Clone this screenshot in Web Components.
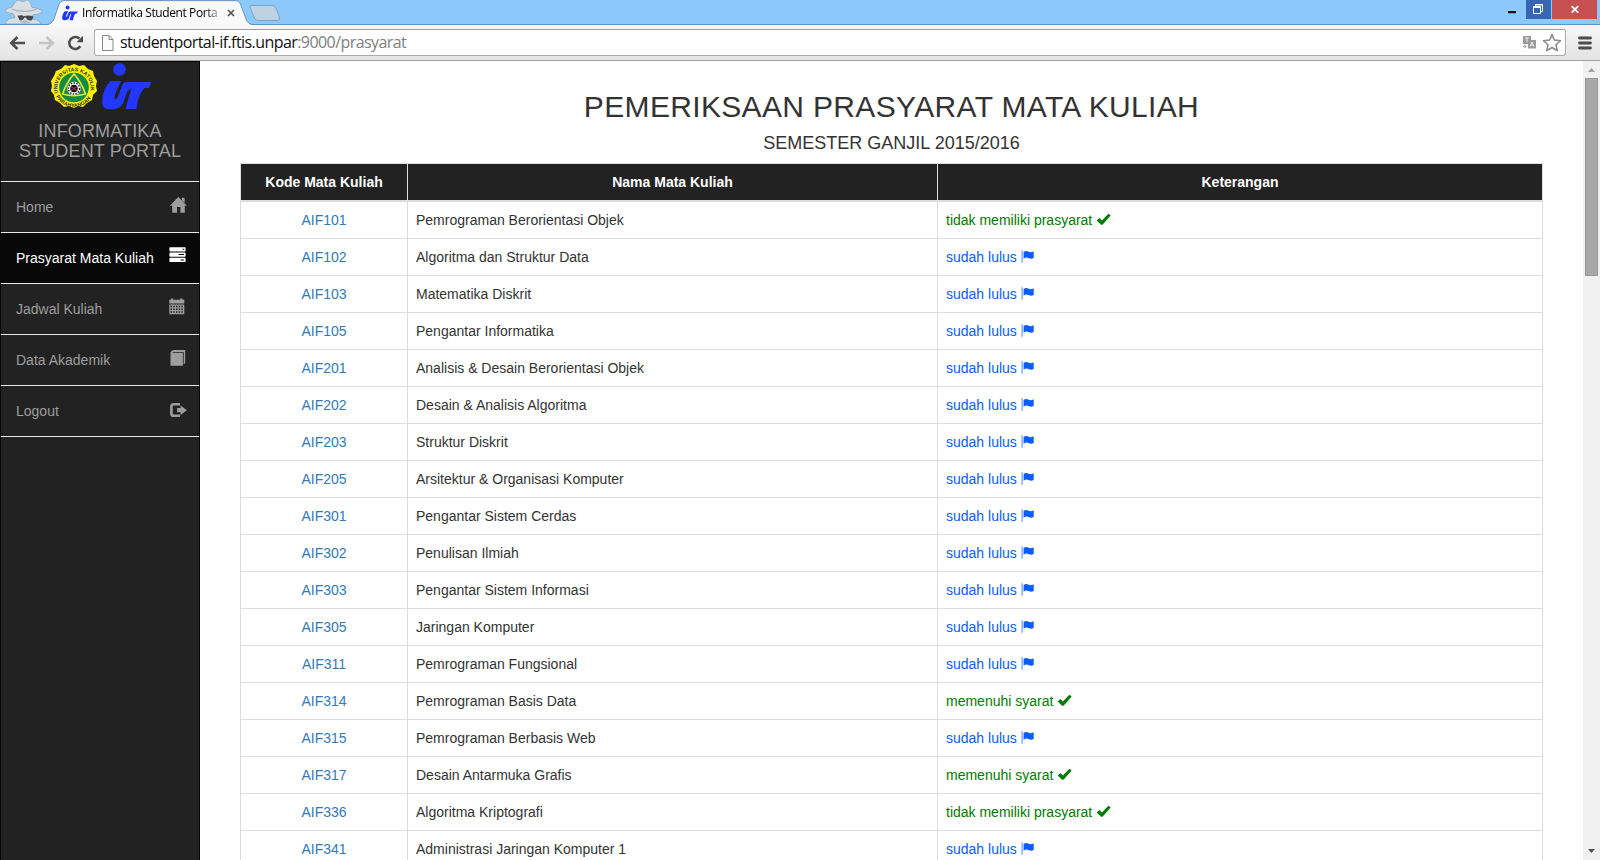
<!DOCTYPE html>
<html lang="id">
<head>
<meta charset="utf-8">
<title>Informatika Student Portal</title>
<style>
html,body{margin:0;height:100%;overflow:hidden;background:#fff}
body{font:14px/20px "Liberation Sans",Arial,sans-serif;color:#333}
</style>
</head>
<body>
<browser-window>
  <student-sidebar slot="page">
    <nav-item icon="home">Home</nav-item>
    <nav-item icon="tasks" active>Prasyarat Mata Kuliah</nav-item>
    <nav-item icon="calendar">Jadwal Kuliah</nav-item>
    <nav-item icon="book">Data Akademik</nav-item>
    <nav-item icon="logout">Logout</nav-item>
  </student-sidebar>
  <prasyarat-page slot="page">
    <span slot="title">PEMERIKSAAN PRASYARAT MATA KULIAH</span>
    <span slot="term">SEMESTER GANJIL 2015/2016</span>
  </prasyarat-page>
  <scroll-bar slot="page"></scroll-bar>
</browser-window>
<script>
const define = (name, html, setup) => customElements.define(name, class extends HTMLElement {
  constructor() {
    super();
    const t = document.createElement('template');
    t.innerHTML = html;
    this.attachShadow({mode: 'open'}).append(t.content.cloneNode(true));
  }
  connectedCallback() { if (setup) setup(this, this.shadowRoot); }
});

const ICONS = {
  home: '<svg width="18" height="17" viewBox="-.8 .3 18 17"><path d="M8.500 .2L17 9H15v7H10.600v-5.600H7.200V16H2.400V9H0z"/><path d="M12 1h2.800v5L12 3.500z"/></svg>',
  tasks: '<svg width="18" height="17" viewBox="0 1.600 18 17" overflow="visible"><path fill-rule="evenodd" d="M1 .8H16l.6.6v3l-.6.6H1L.4 4.400V1.400zM13.500 2.300h1.800v1H13.500zM1 6H16l.6.6v3.200l-.6.6H1l-.6-.6V6.600zM9.500 7.700h5.500v1H9.500zM1 11.400H16l.6.6v3l-.6.6H1l-.6-.6V12zM11.500 13h3.500v1h-3.500z"/></svg>',
  calendar: '<svg width="18" height="17" viewBox="0 .8 18 17" overflow="visible"><path d="M.3 1.500H2V.3h2.300v1.200h6.800V.3h2.300v1.200h1.900v3.800H.3z"/><path fill-rule="evenodd" d="M.3 6.200h15v9.900H.3zM1.500 7.500v1.500h1.500V7.500zM4.300 7.500v1.500H5.800V7.500zM7 7.500v1.500h1.500V7.500zM9.700 7.500v1.500h1.500V7.500zM12.400 7.500v1.500h1.500V7.500zM1.500 10.300V11.800h1.500v-1.500zM4.300 10.300V11.800H5.800v-1.500zM7 10.300V11.800h1.500v-1.500zM9.700 10.300V11.800h1.500v-1.500zM12.400 10.300V11.800h1.500v-1.500zM1.500 13.100v1.400h1.500v-1.400zM4.300 13.100v1.400H5.800v-1.400zM7 13.100v1.400h1.500v-1.400zM9.700 13.100v1.400h1.500v-1.400zM12.400 13.100v1.400h1.500v-1.400z"/></svg>',
  book: '<svg width="18" height="17" viewBox="-.5 .5 18 17"><path d="M3.400 .6h12.300v12.800l-1.500 1.800V2.400H4.200L2.400 3.200H13.400v13H1V2.800z"/></svg>',
  logout: '<svg width="18" height="17" viewBox="-.6 0 18 17" overflow="visible"><path d="M10.500 2.300H4.200Q1.800 2.300 1.800 4.600V11.400Q1.800 13.800 4.200 13.800H10.500" fill="none" stroke="currentColor" stroke-width="2.600"/><path d="M11 3.500L17.300 8.200 11 12.900V10.300H7.500V6.100H11z"/></svg>',
  ok: '<svg width="16" height="14"><path d="M.7 8.600L3.400 5.900l2.500 2.500L12.400 1.700l2.300 1.900L6.500 12.800H5.100z"/></svg>',
  flag: '<svg width="14" height="15"><path d="M.6 1.300h1v12.500H.6z" opacity=".75"/><path d="M2.600 3.100C4.500 1.500 6 1.900 7.600 2.800 9.300 3.500 10.800 3.300 12.700 2.200V9c-1.800 1-3.400 .9-5.100 .1C6 8.400 4.500 8.200 2.600 9.700z"/></svg>'
};

const FIGURE = '<circle cx="17.500" cy="6" r="6.200"/><path d="M8.500 17.500H19L14 28.500Q11.500 35.500 13.200 35.700 15.200 35.700 17 30L20.800 20.500Q21.700 18.400 24.500 18.400H49.300L47 24.500H42.500Q38 29 36.300 36 35 40 34.300 45.600H23.500L27.500 31 29.500 25.300 25.500 27.500 21 40Q18 45.700 9.500 45.700H6Q0 45 .2 38.200 0 26 8.500 17.500z"/>';

define('glyph-icon', `<style>:host{display:block;line-height:0}svg{display:block;fill:currentColor}</style>`,
  (el, root) => root.append(Object.assign(document.createElement('template'), {innerHTML: ICONS[el.getAttribute('name')]}).content));

define('window-controls', `<style>
:host{display:flex;align-items:flex-start;margin-right:3px}
svg{display:block}.r{background:#3665b3}.c{background:#c75050}
</style>
<svg width="26" height="19"><path d="M8 11h8v2.200H8z" fill="#111"/></svg>
<svg class="r" width="25" height="19"><g fill="none" stroke="#fff"><path d="M9.500 7V4.500h7v7H14"/><path d="M7.500 6.500h7v7h-7z"/><path d="M7 7.500h8M9 5h8"/></g></svg>
<svg width="1" height="19"></svg>
<svg class="c" width="45" height="19"><path d="M19.700 6.200l6.500 6.500m0-6.500l-6.500 6.500" stroke="#fff" stroke-width="1.900"/></svg>`);

define('tab-strip', `<style>
:host{display:flex;height:25px;background:#8cc8fa;box-shadow:inset 0 -1px #5f93c4;box-sizing:border-box}
.spy{flex:none;margin-left:4px}
.tab{position:relative;width:222px;height:25px;margin-left:5px;flex:none}
.tab>svg{position:absolute;left:0;top:0}
.in{position:relative;display:flex;align-items:center;height:25px;padding-left:15px}
.in span{width:142px;margin-left:4px;white-space:nowrap;font:12px/24px "Open Sans","Noto Sans",sans-serif;letter-spacing:-.4px;color:#000;
-webkit-mask:linear-gradient(90deg,#000 86%,rgba(0,0,0,.3) 97%)}
.new{margin:5px 0 0 -20px;flex:none}.gap{flex:1}
</style>
<svg class="spy" width="38" height="24" viewBox="5 1 34 23" preserveAspectRatio="none"><path d="M6 24q2-6 9-6l-2-4q-7-1-7-3 3-3 6-3L15 3q2-3 5-1 3 1 5-1 3 0 4 4l1 3q7 1 9 4-2 3-8 3l-1 4q7 1 8 5z" fill="#d9dee2" stroke="#8aa3b8" stroke-width=".7"/><path d="M12 10q12 4 22 0" stroke="#a9b2ba" stroke-width="1.200" fill="none"/><path d="M17 16q5-1 5.500 .6 4-1.600 9 .2l-1.500 3.600q-4 1-5.500-2.600h-1q-2 3.600-4.500 2.600z" fill="#43494e"/><path d="M19 22l5-2 5 3-4 1z" fill="#b5bdc4"/></svg>
<div class="tab"><svg width="208" height="25"><path d="M0 25Q5 24 7 19L12 4Q13.500 .6 17 .6H189Q192 .6 193.500 4L199 19Q201 24.500 206 25z" fill="#f9f9f9"/><path d="M0 24.500Q5 24 7 19L12 4Q13.500 .6 17 .6H189Q192 .6 193.500 4L199 19Q201 24.500 206 24.500" fill="none" stroke="#6d95ba"/></svg>
<div class="in"><svg width="16" height="16" viewBox="0 0 50 46" fill="#2238ff">${FIGURE}</svg><span>Informatika Student Porta</span><svg width="14" height="12"><path d="M4 3l6 6m0-6l-6 6" stroke="#555" stroke-width="1.700"/></svg></div></div>
<svg class="new" width="32" height="17"><path d="M1 .5H23Q26 .5 27 3L30.500 13Q31 15.500 28.500 15.500H9Q6.500 15.500 5.500 13L1.500 3Q.5 1 1 .5z" fill="#bdd3e4" stroke="#7fa4c3"/></svg>
<div class="gap"></div><window-controls></window-controls>`);

define('tool-bar', `<style>
:host{display:flex;align-items:center;height:36px;box-sizing:border-box;padding:0 9px 0 9px;background:linear-gradient(#f8f8f8,#e3e3e3);border-bottom:1px solid #a0a0a0}
svg{flex:none;display:block}
.nav{margin-right:12px}.re{margin-right:10px}
.box{flex:1;display:flex;align-items:center;height:27px;box-sizing:border-box;border:1px solid #acacac;border-top-color:#a0a0a0;border-radius:3px;background:#fff;padding:0 3px 0 7px}
.url{flex:1;margin-left:6px;font:16px/22px "Open Sans","Noto Sans",sans-serif;padding-bottom:2px;letter-spacing:-.57px;color:#808080;white-space:nowrap}
.url b{font-weight:400;color:#111}
.menu{margin-left:12px;margin-right:-1px}
</style>
<svg class="nav" width="17" height="16"><path d="M16 8H3M8.500 2L2.300 8l6.200 6" fill="none" stroke="#505050" stroke-width="2.700"/></svg>
<svg class="nav" width="17" height="16"><path d="M1 8h13M8.500 2l6.200 6-6.200 6" fill="none" stroke="#c5c5c5" stroke-width="2.700"/></svg>
<svg class="re" width="17" height="16"><path d="M13.300 11.300A6 6 0 1 1 12.500 3.700" fill="none" stroke="#4b4b4b" stroke-width="2.500"/><path d="M16 .7V7.200H9.500z" fill="#4b4b4b"/></svg>
<div class="box"><svg width="12" height="16"><path d="M.5 .5H7l4 4V15.500H.5zM7 .5v4h4" fill="#fbfbfb" stroke="#888"/></svg>
<div class="url"><b>studentportal-if.ftis.unpar</b>:9000/prasyarat</div>
<svg width="15" height="15"><path d="M1 1h8v4h5v8.500H6V9H1z" fill="#999"/><path d="M3 3h4M5 3v4M8 11.500l2-4.500 2 4.500M9 10h2" stroke="#eee" fill="none" stroke-width="1"/><path d="M1 11.500h4M3 9.700v4" stroke="#999" stroke-width="1.200" stroke-dasharray="1.400 .8"/></svg>
<svg style="margin-left:5px" width="20" height="19" viewBox="0 0 20 19"><path d="M10 1.500l2.400 5.600 6.100.6-4.600 4 1.400 6-5.300-3.200-5.300 3.200 1.400-6-4.600-4 6.100-.6z" fill="#fff" stroke="#888" stroke-width="1.500" stroke-linejoin="round"/></svg></div>
<svg class="menu" width="14" height="14"><path d="M1.500 2h11M1.500 7h11M1.500 12h11" stroke="#4d4d4d" stroke-width="2.800" stroke-linecap="round"/></svg>`);

define('browser-window', `<style>
:host{display:flex;flex-direction:column;width:1600px;height:860px;overflow:hidden}
main{flex:1;display:flex;min-height:0}
</style><tab-strip></tab-strip><tool-bar></tool-bar><main><slot name="page"></slot></main>`);

define('campus-logos', `<style>:host{display:flex;justify-content:center;gap:5px;padding:1px 0 0 2px}svg{display:block}text{font:bold 5.200px "Liberation Sans",sans-serif;fill:#26331a}</style>
<svg width="46" height="48" viewBox="-23 -24.500 46 48">
<path d="M0-23.500l5 2 5-1 4 4 5 2 1 5 3 5-1 5 1 5-4 4-1 5-5 3-4 4-5-1-4 2-5-2-5 1-4-4-5-3-1-5-3-4 1-5-1-5 3-5 2-5 5-2 4-4 4 1z" fill="#fff200"/>
<circle r="14.800" fill="#138b43"/><path d="M0-13.500Q7-6 11.500 6.500 0 10-11.500 6.500-7-6 0-13.500z" fill="#138b43" stroke="#e9e438" stroke-width="1.700"/>
<circle cy="1" r="6.800" fill="#fff"/><circle cy="1" r="5.600" fill="none" stroke="#222" stroke-width="1.500" stroke-dasharray="1.500 1.300"/><circle cy="1" r="3.800" fill="#151515"/><path d="M-3-1l6 4M-3 3l6-4" stroke="#b33"/>
<defs><path id="u" d="M-15.900 5.500A16.700 16.700 0 1 1 15.900 5.500"/><path id="l" d="M-18.500 8A20.500 20.500 0 0 0 18.500 8"/></defs>
<text><textPath href="#u" textLength="60">UNIVERSITAS KATOLIK</textPath></text><text><textPath href="#l" startOffset="1" textLength="42">PARAHYANGAN</textPath></text></svg>
<svg width="50" height="48" viewBox="0 -.5 50 48" fill="#2238ff">${FIGURE}</svg>`);

define('student-sidebar', `<style>
:host{display:block;width:200px;box-sizing:border-box;border:solid #080808;border-width:1px 1px 0;background:#222;flex:none}
header{height:119px;border-bottom:1px solid #e7e7e7;text-align:center;font-size:18px;line-height:20px;color:#9d9d9d;letter-spacing:.15px}
p{margin:10px 0 0}
</style><header><campus-logos></campus-logos><p>INFORMATIKA<br>STUDENT PORTAL</p></header><nav><slot></slot></nav>`);

define('nav-item', `<style>
:host{display:flex;justify-content:space-between;box-sizing:border-box;height:51px;padding:15px 12px 15px 15px;border-bottom:1px solid #e7e7e7;color:#9d9d9d}
:host([active]){background:#080808;color:#fff}
:host([icon=logout]) glyph-icon{margin-top:1px}
</style><span><slot></slot></span>`, (el, root) => {
  const g = document.createElement('glyph-icon');
  g.setAttribute('name', el.getAttribute('icon'));
  root.append(g);
});

define('status-label', `<style>
:host{display:flex;gap:4px;color:#0a5cff}:host([kind=ok]){color:#007c00}glyph-icon{margin-top:2px}
</style><span><slot></slot></span>`, (el, root) => {
  const g = document.createElement('glyph-icon');
  g.setAttribute('name', el.getAttribute('kind'));
  root.append(g);
});

const COURSES = [
 ['AIF101','Pemrograman Berorientasi Objek','n'],['AIF102','Algoritma dan Struktur Data'],['AIF103','Matematika Diskrit'],
 ['AIF105','Pengantar Informatika'],['AIF201','Analisis &amp; Desain Berorientasi Objek'],['AIF202','Desain &amp; Analisis Algoritma'],
 ['AIF203','Struktur Diskrit'],['AIF205','Arsitektur &amp; Organisasi Komputer'],['AIF301','Pengantar Sistem Cerdas'],
 ['AIF302','Penulisan Ilmiah'],['AIF303','Pengantar Sistem Informasi'],['AIF305','Jaringan Komputer'],
 ['AIF311','Pemrograman Fungsional'],['AIF314','Pemrograman Basis Data','m'],['AIF315','Pemrograman Berbasis Web'],
 ['AIF317','Desain Antarmuka Grafis','m'],['AIF336','Algoritma Kriptografi','n'],['AIF341','Administrasi Jaringan Komputer 1']];
const STATUS = {n: 'tidak memiliki prasyarat', m: 'memenuhi syarat'};

define('course-table', `<style>
:host{display:block;border:solid #ddd;border-width:1px 1px 0;}
.row{display:grid;grid-template-columns:166px 530px 605px;border-bottom:1px solid #ddd}
.row>*{padding:8px;height:20px;border-left:1px solid #ddd;white-space:nowrap}
.row>:first-child{border-left:0;text-align:center;color:#337ab7}
.row.head{border-bottom-width:2px;background:#222;font-weight:700;text-align:center}
.row.head>*,.row.head>:first-child{color:#fff}
</style><div class="row head"><span>Kode Mata Kuliah</span><span>Nama Mata Kuliah</span><span>Keterangan</span></div>` +
COURSES.map(([c, n, s]) => `<div class="row"><span>${c}</span><span>${n}</span><status-label kind="${s ? 'ok' : 'flag'}">${STATUS[s] || 'sudah lulus'}</status-label></div>`).join(''));

define('prasyarat-page', `<style>
:host{display:block;flex:1;min-width:0;padding:29px 40px 0;overflow:hidden}
h2,h4{margin:0;font-weight:400;text-align:center}
h2{font-size:30px;line-height:33px;letter-spacing:.34px}h4{font-size:18px;line-height:20px;margin:10px 0 10px}
</style><h2><slot name="title"></slot></h2><h4><slot name="term"></slot></h4><course-table></course-table>`);

define('scroll-bar', `<style>
:host{display:flex;flex-direction:column;align-items:center;width:17px;background:#f0f0f0;flex:none}
i{width:13px;height:198px;box-sizing:border-box;background:#a8a8a8;border:1px solid #999}
svg{display:block}.gap{flex:1}
</style><svg width="17" height="17"><path d="M5 11h7L8.500 7z" fill="#a0a0a0"/></svg><i></i><div class="gap"></div><svg width="17" height="17"><path d="M5 6h7L8.500 10z" fill="#505050"/></svg>`);
</script>
</body>
</html>
